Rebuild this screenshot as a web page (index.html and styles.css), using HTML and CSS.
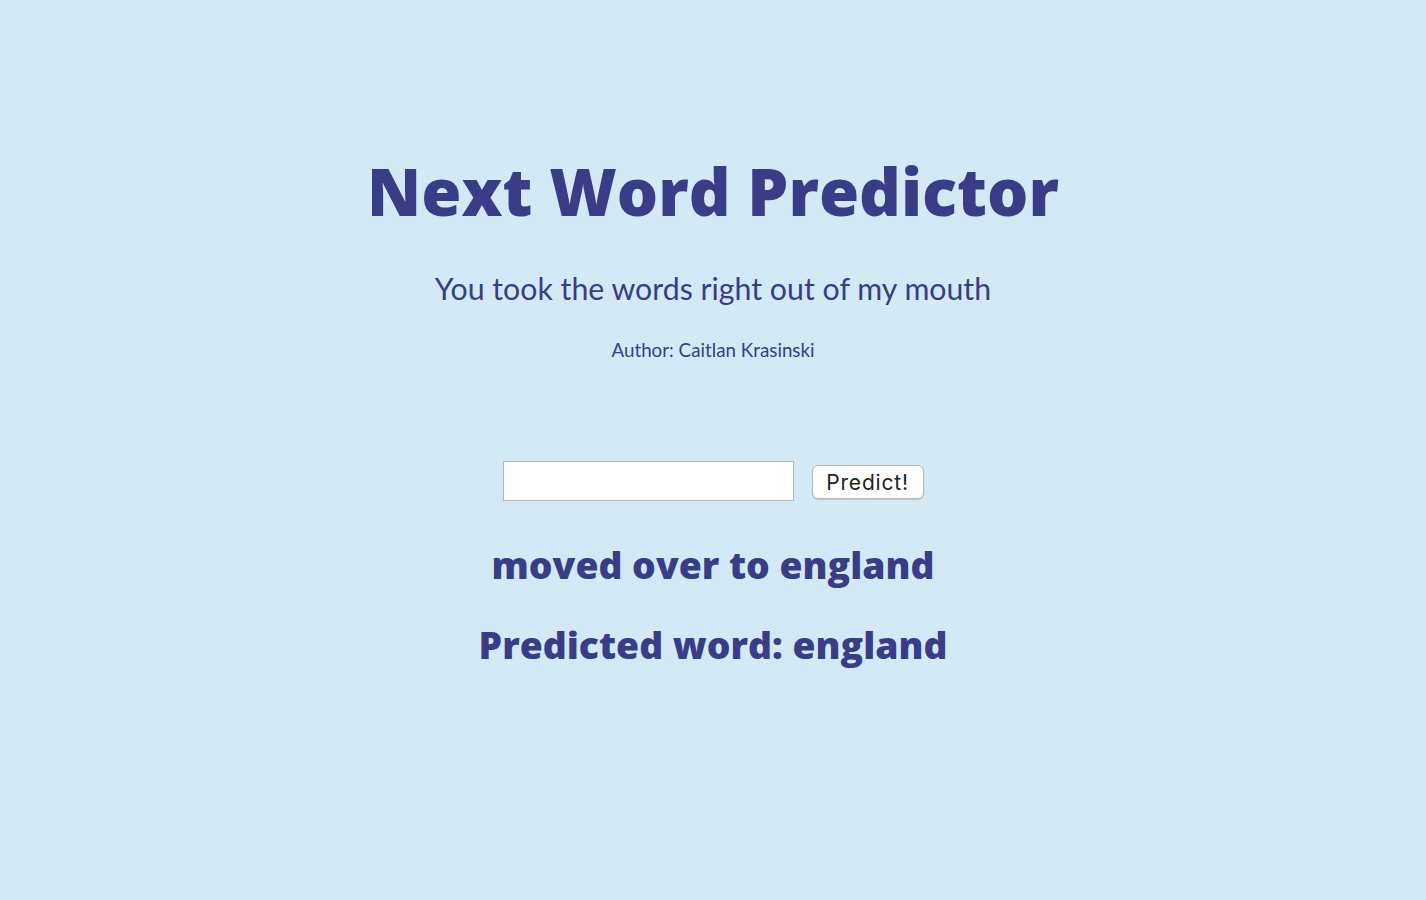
FILE: index.html
```html
<!DOCTYPE html>
<html>
<head>
<meta charset="utf-8">
<title>Next Word Predictor</title>
<link rel="stylesheet" href="styles.css">
</head>
<body>
<main class="page">
  <h1 class="title">Next Word Predictor</h1>
  <h2 class="subtitle">You took the words right out of my mouth</h2>
  <p class="author">Author: Caitlan Krasinski</p>
  <form class="predict-form">
    <input class="text-input" type="text">
    <button class="predict-btn" type="button">Predict!</button>
  </form>
  <p class="phrase">moved over to england</p>
  <p class="result">Predicted word: england</p>
</main>
</body>
</html>
```

FILE: styles.css
```css
html, body {
  margin: 0;
  padding: 0;
  background: #d3eaf6;
  height: 100%;
}
body {
  font-family: Lato, "Open Sans", sans-serif;
  color: #393c86;
}
.page {
  display: flex;
  flex-direction: column;
  align-items: center;
  padding-top: 151px;
}
.title {
  margin: 0;
  font-family: "Open Sans", Lato, sans-serif;
  font-size: 65px;
  font-weight: 800;
  line-height: 80px;
}
.subtitle {
  margin: 37px 0 0;
  font-size: 30.3px;
  font-weight: 400;
  line-height: 40px;
}
.author {
  margin: 30px 0 0;
  font-size: 18.8px;
  line-height: 24px;
}
.predict-form {
  margin-top: 99px;
  display: flex;
  align-items: center;
  gap: 18px;
}
.text-input {
  width: 291px;
  height: 40px;
  box-sizing: border-box;
  border: 1px solid #a9b8c4;
  background: #fff;
  margin: 0;
  padding: 0 4px;
}
.predict-btn {
  height: 34px;
  width: 112px;
  margin-top: 2px;
  box-sizing: border-box;
  border: 1px solid #b4b9be;
  border-radius: 6px;
  background: #fff;
  box-shadow: 0 1px 1px rgba(0,0,0,0.15);
  font-family: Inter, "Liberation Sans", sans-serif;
  font-size: 21px;
  letter-spacing: 0.8px;
  color: #222;
  padding: 0;
}
.phrase {
  margin: 39px 0 0;
  font-family: "Open Sans", Lato, sans-serif;
  font-size: 37.3px;
  font-weight: 800;
  line-height: 50px;
}
.result {
  margin: 30px 0 0;
  font-family: "Open Sans", Lato, sans-serif;
  font-size: 37.3px;
  font-weight: 800;
  line-height: 50px;
}
```
